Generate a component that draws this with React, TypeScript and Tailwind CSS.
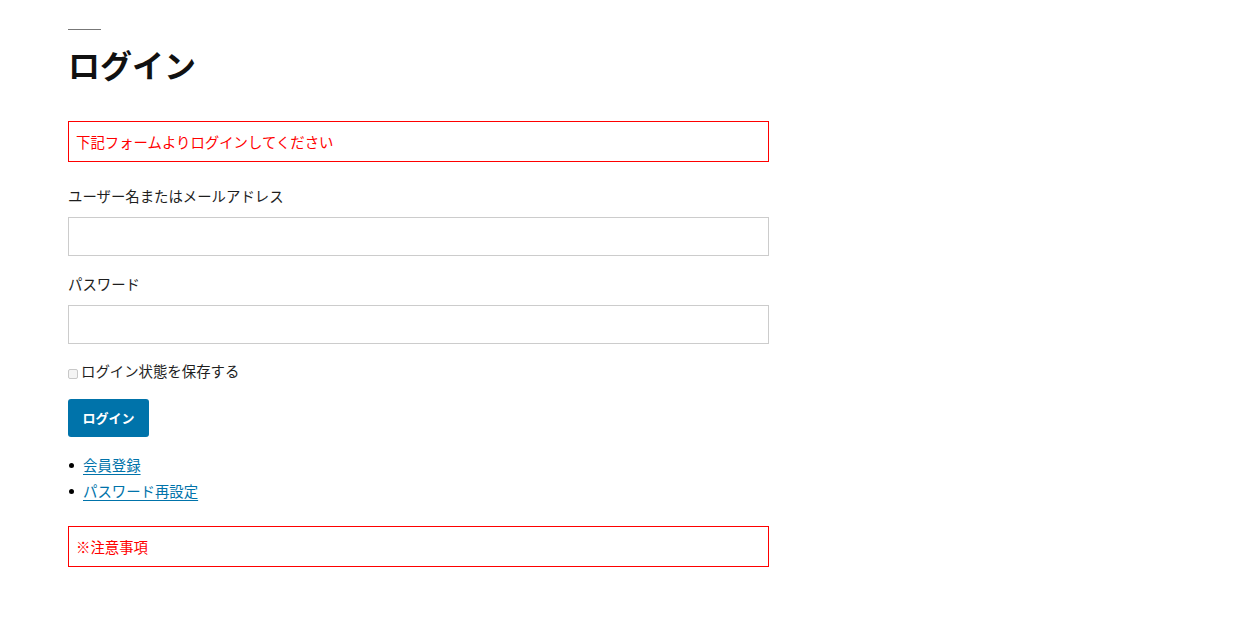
const font = { fontFamily: '"Noto Sans CJK JP", "Noto Sans", sans-serif' };

function Notice({ children }: { children: React.ReactNode }) {
  return (
    <div className="flex h-[41px] w-[701px] items-center border border-[#ff0000] px-[7px] text-[14.4px] text-[#ff0000]">
      {children}
    </div>
  );
}

function Field({ label, type }: { label: string; type: string }) {
  return (
    <div className="flex flex-col">
      <label className="text-[14.4px] leading-[22px] text-[#1e1e1e]">{label}</label>
      <input
        type={type}
        className="mt-[10px] h-[39px] w-[701px] border border-[#cccccc] bg-white px-2 outline-none"
      />
    </div>
  );
}

export default function App() {
  const links = ["会員登録", "パスワード再設定"];

  return (
    <div className="min-h-screen bg-white" style={font}>
      <div className="flex flex-col px-[68px] pt-[29px]">
        <div className="h-px w-[33px] bg-[#777777]" />
        <h1 className="mt-[15px] text-[32px] font-bold leading-[38px] text-[#111111]">ログイン</h1>

        <div className="mt-[38px]">
          <Notice>下記フォームよりログインしてください</Notice>
        </div>

        <div className="mt-[23px]">
          <Field label="ユーザー名またはメールアドレス" type="text" />
        </div>
        <div className="mt-[17px]">
          <Field label="パスワード" type="password" />
        </div>

        <label className="mt-[16px] flex items-center text-[14.4px] leading-[22px] text-[#1e1e1e]">
          <span className="mt-[5px] mr-[3px] h-[10px] w-[10px] rounded-[2px] border border-[#c8c8c8] bg-[#f4f4f4]" />
          ログイン状態を保存する
        </label>

        <button className="mt-[17px] h-[38px] w-[81px] rounded-[3px] bg-[#0073aa] text-[13px] font-bold text-white">
          ログイン
        </button>

        <ul className="mt-[15px] flex flex-col">
          {links.map((l) => (
            <li key={l} className="flex items-center text-[14.4px] leading-[26px]">
              <span className="ml-[1px] mr-[9px] h-[5px] w-[5px] rounded-full bg-black" />
              <a href="#" className="text-[#0073aa] underline underline-offset-[3px]">
                {l}
              </a>
            </li>
          ))}
        </ul>

        <div className="mt-[22px]">
          <Notice>※注意事項</Notice>
        </div>
      </div>
    </div>
  );
}
